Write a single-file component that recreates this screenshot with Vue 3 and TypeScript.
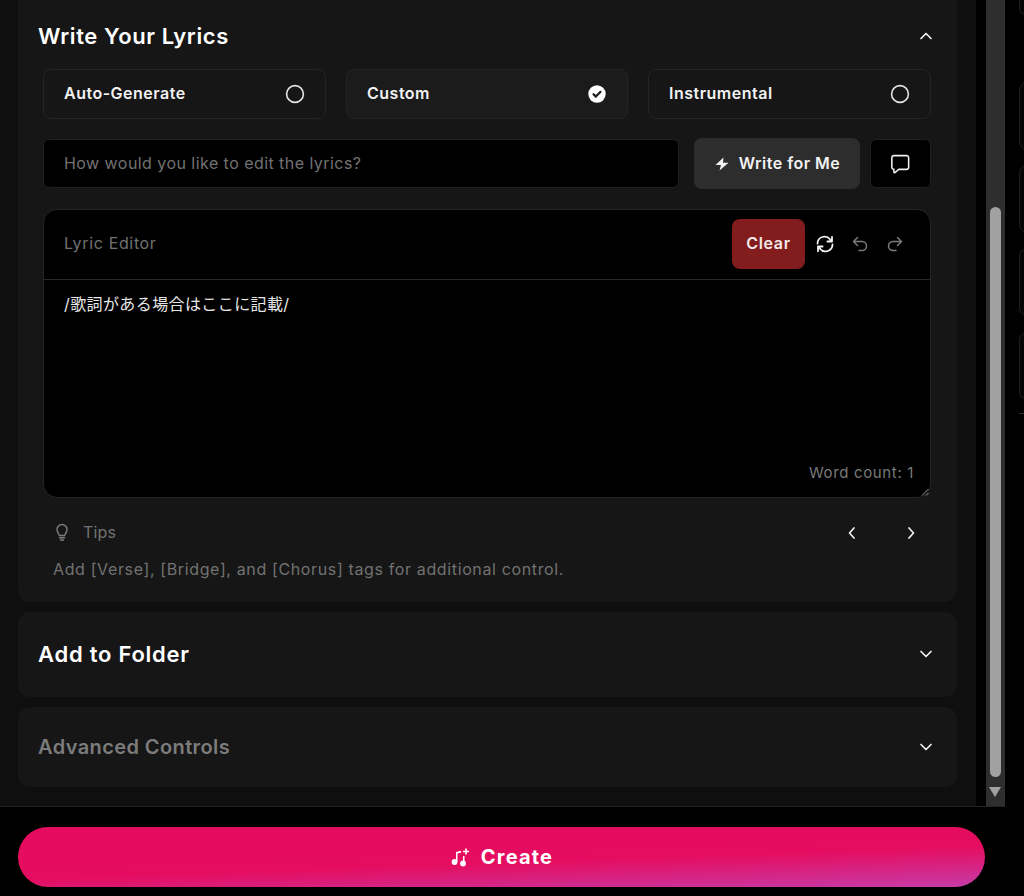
<script setup lang="ts">
interface Mode { label: string; checked: boolean }
const modes: Mode[] = [
  { label: 'Auto-Generate', checked: false },
  { label: 'Custom', checked: true },
  { label: 'Instrumental', checked: false },
]
</script>

<template>
  <div class="page">
    <div class="top">
      <main class="panel">
        <section class="card first">
          <header class="head">
            <h2 class="title">Write Your Lyrics</h2>
            <svg class="chev" viewBox="0 0 16 16"><path d="M3 10.500 8 5.500l5 5" /></svg>
          </header>
          <div class="inner">
            <div class="modes">
              <div v-for="m in modes" :key="m.label" class="mode" :class="{ on: m.checked }">
                <span>{{ m.label }}</span>
                <svg v-if="m.checked" class="radio" viewBox="0 0 20 20">
                  <circle cx="10" cy="10" r="8.700" fill="#fff" />
                  <path d="M6.500 10.200 8.900 12.600 13.500 7.800" fill="none" stroke="#1c1c1c" stroke-width="2.200" stroke-linecap="round" stroke-linejoin="round" />
                </svg>
                <svg v-else class="radio" viewBox="0 0 20 20">
                  <circle cx="10" cy="10" r="8.400" fill="none" stroke="#e4e4e4" stroke-width="1.600" />
                </svg>
              </div>
            </div>
            <div class="prompt">
              <div class="input">How would you like to edit the lyrics?</div>
              <button class="write">
                <svg class="bolt" viewBox="0 0 16 16"><path d="M9.500 1.500 1.500 9H7L5.500 14.500 14.500 6.800H9z" fill="#f2f2f2" /></svg>
                Write for Me
              </button>
              <button class="chat">
                <svg viewBox="0 0 20 20"><path d="M5 3h10.500A1.700 1.700 0 0 1 17.200 4.700v8.100a1.700 1.700 0 0 1-1.700 1.700H9l-3.300 2.600a.5.5 0 0 1-.8-.4V14.500A1.700 1.700 0 0 1 3.200 12.800V4.700A1.700 1.700 0 0 1 5 3z" fill="none" stroke="#efefef" stroke-width="1.300" stroke-linejoin="round" /></svg>
              </button>
            </div>
            <div class="editor">
              <div class="ed-head">
                <span class="ed-label">Lyric Editor</span>
                <div class="ed-tools">
                  <button class="clear">Clear</button>
                  <svg class="tool" viewBox="0 0 20 20" stroke="#f2f2f2" stroke-width="1.800"><path d="M2.500 9.500A7 7 0 0 1 15 5.300L17 7.500M17 2.800V7.500h-4.600" /><path d="M17.500 10.500A7 7 0 0 1 5 14.700L3 12.500M3 17.200V12.500h4.600" /></svg>
                  <svg class="tool" viewBox="0 0 20 20" stroke="#7b7b7b" stroke-width="1.500"><path d="M7.500 3.500 3.500 7.500l4 4M3.500 7.500H12a4.500 4.500 0 0 1 0 9H9" /></svg>
                  <svg class="tool" viewBox="0 0 20 20" stroke="#7b7b7b" stroke-width="1.500"><path d="M12.500 3.500l4 4-4 4M16.500 7.500H8a4.500 4.500 0 0 0 0 9h3" /></svg>
                </div>
              </div>
              <div class="ed-body">
                <p class="lyric">/歌詞がある場合はここに記載/</p>
                <p class="count">Word count: 1</p>
                <svg class="grip" viewBox="0 0 8 8"><path d="M7.500 1 1 7.500M7.500 5 5 7.500" stroke="#9a9a9a" stroke-width="1" fill="none" /></svg>
              </div>
            </div>
            <div class="tips">
              <div class="tips-head">
                <svg class="bulb" viewBox="0 0 18 20"><path d="M6.300 13.500c0-1.500-2.300-2.800-2.300-6a5 5 0 0 1 10 0c0 3.200-2.300 4.500-2.300 6zM6.500 15.800h5M7.500 18h3" fill="none" stroke="#7d7d7d" stroke-width="1.400" stroke-linecap="round" stroke-linejoin="round" /></svg>
                <span class="tips-label">Tips</span>
                <div class="tips-nav">
                  <svg class="nav" viewBox="0 0 16 16"><path d="M10 3 5.500 8l4.500 5" /></svg>
                  <svg class="nav" viewBox="0 0 16 16"><path d="M6 3l4.500 5L6 13" /></svg>
                </div>
              </div>
              <p class="tip">Add [Verse], [Bridge], and [Chorus] tags for additional control.</p>
            </div>
          </div>
        </section>
        <section class="card bar folder">
          <h2 class="title">Add to Folder</h2>
          <svg class="chev" viewBox="0 0 16 16"><path d="M3 5.500 8 10.500l5-5" /></svg>
        </section>
        <section class="card bar advanced">
          <h2 class="title dim">Advanced Controls</h2>
          <svg class="chev" viewBox="0 0 16 16"><path d="M3 5.500 8 10.500l5-5" /></svg>
        </section>
      </main>
      <div class="scrollbar">
        <div class="thumb"></div>
        <div class="arrow"></div>
      </div>
    </div>
    <footer class="footer">
      <button class="create">
        <svg class="music" viewBox="0 0 20 20" fill="#fff">
          <circle cx="4.500" cy="15" r="2.900" />
          <circle cx="13" cy="16.500" r="2.900" />
          <path d="M6 15V5l5-1.200v2L7.500 6.600V15zM14.500 16.500V9h-1.500v7.500z" />
          <path d="M16 1.500v6M13 4.500h6" stroke="#fff" stroke-width="1.600" />
        </svg>
        Create
      </button>
    </footer>
    <aside class="side">
      <div class="ghost g1"></div>
      <div class="ghost"></div>
      <div class="ghost"></div>
      <div class="ghost"></div>
      <div class="ghost"></div>
      <div class="rule"></div>
    </aside>
  </div>
</template>

<style>
html, body { margin: 0; background: #000; }
</style>

<style scoped>
.page {
  position: relative;
  width: 1024px;
  height: 896px;
  overflow: hidden;
  background: #000;
  color: #fff;
  font-family: Inter, "Noto Sans CJK JP", sans-serif;
}
.top { display: flex; width: 1005px; height: 806px; }
.panel {
  box-sizing: border-box;
  width: 976px;
  height: 806px;
  padding: 0 19px 0 18px;
  background: #0f0f0f;
  display: flex;
  flex-direction: column;
  gap: 10px;
}
.card { background: #161616; border-radius: 12px; }
.first { height: 602px; border-radius: 0 0 12px 12px; }
.head {
  height: 69px;
  padding: 2px 21px 0 20px;
  box-sizing: border-box;
  display: flex;
  align-items: center;
  justify-content: space-between;
}
.title { margin: 0; font-size: 22px; font-weight: 600; letter-spacing: 0.6px; color: #fff; }
.bar .title { letter-spacing: 0.75px; }
.bar .title.dim { color: #7c7c7c; font-size: 20px; letter-spacing: 0.4px; }
.chev { width: 16px; height: 16px; margin-right: 2px; }
.chev path, .nav path { fill: none; stroke: #f0f0f0; stroke-width: 1.700; stroke-linecap: round; stroke-linejoin: round; }
.inner { padding: 0 26px 0 25px; }
.modes { display: grid; grid-template-columns: 283px 282px 283px; gap: 20px; }
.mode {
  box-sizing: border-box;
  height: 50px;
  padding: 0 20px 3px 20px;
  display: flex;
  align-items: center;
  justify-content: space-between;
  border: 1px solid #242424;
  border-radius: 8px;
  font-size: 16px;
  font-weight: 600;
  letter-spacing: 0.5px;
  color: #f2f2f2;
}
.mode.on { background: #1b1b1b; }
.radio { width: 20px; height: 20px; margin-top: 3px; }
.prompt { display: flex; align-items: center; margin-top: 19px; }
.input {
  box-sizing: border-box;
  width: 636px;
  height: 49px;
  padding: 0 20px 1px;
  display: flex;
  align-items: center;
  background: #000;
  border: 1px solid #1f1f1f;
  border-radius: 6px;
  font-size: 16px;
  letter-spacing: 0.45px;
  color: #727272;
}
button { font-family: inherit; border: 0; padding: 0; color: #f2f2f2; cursor: pointer; }
.write {
  box-sizing: border-box;
  width: 166px;
  height: 51px;
  margin-left: 15px;
  padding-bottom: 2px;
  display: flex;
  align-items: center;
  justify-content: center;
  gap: 9px;
  background: #2d2d2d;
  border-radius: 8px;
  font-size: 16px;
  font-weight: 600;
  letter-spacing: 0.5px;
}
.bolt { width: 16px; height: 16px; margin-top: 3px; }
.chat {
  box-sizing: border-box;
  width: 61px;
  height: 49px;
  margin-left: 10px;
  display: flex;
  align-items: center;
  justify-content: center;
  background: #000;
  border: 1px solid #1f1f1f;
  border-radius: 6px;
}
.chat svg { width: 24px; height: 24px; margin-left: -2px; }
.editor {
  margin-top: 20px;
  height: 289px;
  box-sizing: border-box;
  background: #000;
  border: 1px solid #242424;
  border-radius: 14px;
  display: flex;
  flex-direction: column;
}
.ed-head {
  height: 70px;
  box-sizing: border-box;
  flex: none;
  padding: 0 25px 2px 20px;
  display: flex;
  align-items: center;
  justify-content: space-between;
  border-bottom: 1px solid #2a2a2a;
}
.ed-label { font-size: 16px; letter-spacing: 0.65px; color: #727272; margin-bottom: 2px; }
.ed-tools { display: flex; align-items: center; }
.clear {
  width: 73px;
  height: 50px;
  padding-bottom: 2px;
  background: #831d1d;
  border-radius: 8px;
  font-size: 16px;
  font-weight: 600;
  letter-spacing: 0.7px;
  color: #f4e9e9;
  margin-right: 10px;
}
.tool { width: 20px; height: 20px; fill: none; stroke-linecap: round; stroke-linejoin: round; margin-right: 15px; }
.tool:last-child { margin-right: 0; }
.ed-body {
  position: relative;
  flex: 1;
  padding: 13px 16px 15px 20px;
  display: flex;
  flex-direction: column;
}
.lyric { margin: 0; font-size: 16px; line-height: 22px; letter-spacing: 0.4px; color: #e6e6e6; }
.count { margin: auto 0 0; align-self: flex-end; font-size: 15px; line-height: 18px; letter-spacing: 0.65px; color: #7a7a7a; }
.grip { position: absolute; right: 1px; bottom: 1px; width: 8px; height: 8px; }
.tips { padding: 24px 10px 0; }
.tips-head { display: flex; align-items: center; height: 20px; }
.bulb { width: 18px; height: 20px; margin-right: 12px; }
.tips-label { font-size: 16px; letter-spacing: 0.2px; color: #727272; }
.tips-nav { margin-left: auto; margin-right: 2px; margin-top: 2px; display: flex; gap: 43px; }
.nav { width: 16px; height: 16px; }
.tip { margin: 17px 0 0; font-size: 16px; line-height: 20px; letter-spacing: 0.63px; color: #727272; }
.bar {
  box-sizing: border-box;
  padding: 0 21px 0 20px;
  display: flex;
  align-items: center;
  justify-content: space-between;
}
.folder { height: 85px; padding-bottom: 2px; }
.advanced { height: 80px; }
.scrollbar {
  position: relative;
  margin-left: 10px;
  width: 19px;
  height: 806px;
  background: #2e2e2e;
}
.thumb {
  position: absolute;
  left: 4px;
  top: 207px;
  width: 11px;
  height: 570px;
  background: #a1a1a1;
  border-radius: 6px;
}
.arrow {
  position: absolute;
  left: 3px;
  top: 787px;
  width: 0;
  height: 0;
  border-left: 6.500px solid transparent;
  border-right: 6.500px solid transparent;
  border-top: 10px solid #a1a1a1;
}
.footer {
  box-sizing: border-box;
  width: 1005px;
  height: 90px;
  padding: 20px 20px 0 18px;
  border-top: 1px solid #232323;
}
.create {
  width: 967px;
  height: 60px;
  border-radius: 30px;
  display: flex;
  align-items: center;
  justify-content: center;
  gap: 11px;
  background: linear-gradient(178deg, #e60b5f 0%, #e50d60 56%, #c63ca8 100%);
  color: #fff;
  font-size: 20px;
  font-weight: 700;
  letter-spacing: 1.200px;
}
.music { width: 20px; height: 20px; }
.side {
  position: absolute;
  left: 1008px;
  top: 0;
  width: 16px;
  height: 896px;
  background: #000;
}
.ghost {
  position: absolute;
  left: 11px;
  width: 20px;
  height: 66px;
  border: 1px solid #1e1e1e;
  border-radius: 8px;
  background: #050505;
}
.ghost.g1 { top: -52px; }
.ghost:nth-child(2) { top: 82px; }
.ghost:nth-child(3) { top: 165px; }
.ghost:nth-child(4) { top: 248px; }
.ghost:nth-child(5) { top: 332px; }
.rule { position: absolute; left: 11px; top: 413px; width: 5px; height: 1px; background: #333; }
</style>
